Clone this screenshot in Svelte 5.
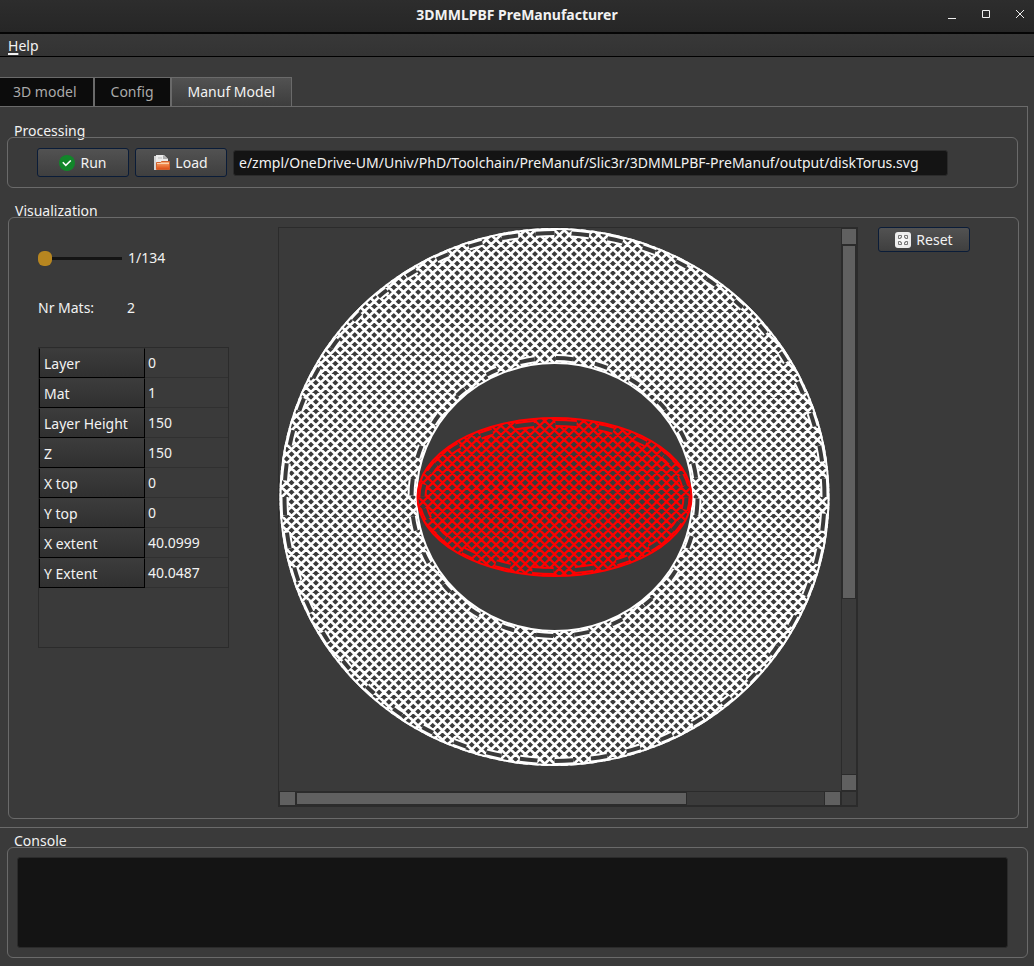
<script>
  import { onMount } from 'svelte';

  let pathField;
  let layer = $state(1);
  let path = $state(
    'e/zmpl/OneDrive-UM/Univ/PhD/Toolchain/PreManuf/Slic3r/3DMMLPBF-PreManuf/output/diskTorus.svg'
  );

  const rows = [
    ['Layer', '0'],
    ['Mat', '1'],
    ['Layer Height', '150'],
    ['Z', '150'],
    ['X top', '0'],
    ['Y top', '0'],
    ['X extent', '40.0999'],
    ['Y Extent', '40.0487']
  ];

  // Slice geometry, in viewport pixels
  const cx = 275.5;
  const cy = 269;
  const pitchX = 9.74;
  const pitchY = 9.53;

  // Both diagonal families of the infill, covering a box around the centre
  function hatch(rx, ry) {
    let d = '';
    const n = Math.ceil(rx / pitchX + ry / pitchY) + 1;
    const h = ry + 4;
    const run = (h / pitchY) * pitchX;
    for (let k = -n; k <= n; k++) {
      const x = cx + k * pitchX;
      d += `M${x - run} ${cy - h}L${x + run} ${cy + h}M${x + run} ${cy - h}L${x - run} ${cy + h}`;
    }
    return d;
  }

  // Turns of the infill path, running along the perimeter
  function turns(rx, ry, count, first, length) {
    let d = '';
    for (let i = 0; i < count; i++) {
      const a = ((first + (i * 360) / count) * Math.PI) / 180;
      const skew = Math.abs(Math.sin(2 * a));
      const half = (length * (1 - skew * 0.45)) / (rx + ry);
      const p = (t) => `${(cx + rx * Math.cos(t)).toFixed(2)} ${(cy + ry * Math.sin(t)).toFixed(2)}`;
      d += `M${p(a - half)}A${rx} ${ry} 0 0 1 ${p(a + half)}`;
    }
    return d;
  }

  const ringHatch = hatch(275, 269);
  const coreHatch = hatch(138, 80);
  const outerTurns = turns(270, 264, 48, 178, 19);
  const innerTurns = turns(143, 139, 24, 184, 18);
  const coreTurns = turns(132, 74, 20, 275, 18);

  onMount(() => {
    pathField.scrollLeft = pathField.scrollWidth;
  });
</script>

<div class="window">
  <header class="titlebar">
    <h1>3DMMLPBF PreManufacturer</h1>
    <div class="controls">
      <button aria-label="Minimize"><svg width="12" height="12"><path d="M2 10.500h8" /></svg></button>
      <button aria-label="Maximize"><svg width="12" height="12"><path d="M2.500 2.500h7v7h-7z" /></svg></button>
      <button aria-label="Close"><svg width="12" height="12"><path d="M2 2l8 8M10 2l-8 8" /></svg></button>
    </div>
  </header>

  <nav class="menubar"><button><u>H</u>elp</button></nav>

  <div class="tabs" role="tablist">
    <button role="tab" aria-selected="false">3D model</button>
    <button role="tab" aria-selected="false">Config</button>
    <button role="tab" aria-selected="true" class="active">Manuf Model</button>
  </div>

  <main class="pane">
    <section class="group">
      <h2>Processing</h2>
      <div class="frame processing">
        <button class="push">
          <svg width="16" height="16" viewBox="0 0 16 16">
            <circle cx="8" cy="8" r="8" fill="#12862a" />
            <path d="M3.800 7.300l3 3 5-4.800" fill="none" stroke="#fff" stroke-width="1.600" />
          </svg>
          Run
        </button>
        <button class="push">
          <svg width="16" height="16" viewBox="0 0 16 16">
            <defs>
              <linearGradient id="folder" x2="0" y2="1">
                <stop offset="0" stop-color="#f7b27e" />
                <stop offset="0.450" stop-color="#f08347" />
                <stop offset="1" stop-color="#dc4a14" />
              </linearGradient>
            </defs>
            <path d="M0 1h3v14H0z" fill="#d4d4d4" />
            <path d="M2 0h8l4 4v6H2z" fill="#ececec" />
            <path d="M9 0v4h5z" fill="#aaa" />
            <path d="M4 3h4" stroke="#bbb" />
            <path d="M2.500 14.500v-7h4l1-1h8v8z" fill="url(#folder)" stroke="#d2602c" />
            <path d="M3 8.500h12" stroke="#fbd0ac" />
          </svg>
          Load
        </button>
        <input class="path" type="text" aria-label="File path" bind:this={pathField} bind:value={path} />
      </div>
    </section>

    <section class="group visual">
      <h2>Visualization</h2>
      <div class="frame visualization">
        <div class="side">
          <div class="slider">
            <input id="layer" type="range" min="1" max="134" bind:value={layer} />
            <label for="layer">{layer}/134</label>
          </div>
          <div class="mats"><span>Nr Mats:</span><span>2</span></div>
          <div class="sheet">
            <table>
              <tbody>
                {#each rows as [name, value]}
                  <tr><th scope="row">{name}</th><td>{value}</td></tr>
                {/each}
              </tbody>
            </table>
          </div>
        </div>

        <div class="view">
          <div class="canvas">
            <svg width="562" height="562" viewBox="0 0 562 562" fill="none">
              <defs>
                <clipPath id="ring">
                  <path
                    clip-rule="evenodd"
                    d="M0.500 269a275 269 0 0 1 550 0a275 269 0 0 1 -550 0zM137.500 269a138 134 0 0 0 276 0a138 134 0 0 0 -276 0z"
                  />
                </clipPath>
                <clipPath id="core"><ellipse {cx} {cy} rx="137" ry="79" /></clipPath>
              </defs>
              <g stroke="#fff">
                <path d={ringHatch} clip-path="url(#ring)" stroke-width="2.700" />
                <path d={outerTurns} stroke-width="8" />
                <path d={innerTurns} stroke-width="8" />
                <ellipse {cx} {cy} rx="274" ry="268" stroke-width="2" />
                <ellipse {cx} {cy} rx="138" ry="134" stroke-width="2" />
              </g>
              <g stroke="#3a3a3a" stroke-width="4">
                <path d={outerTurns} />
                <path d={innerTurns} />
              </g>
              <g stroke="#f00">
                <path d={coreHatch} clip-path="url(#core)" stroke-width="2.300" />
                <path d={coreTurns} stroke-width="8" />
                <ellipse {cx} {cy} rx="137" ry="79" stroke-width="2" />
              </g>
              <path d={coreTurns} stroke="#3a3a3a" stroke-width="4" />
            </svg>
          </div>
          <div class="bar vertical">
            <button aria-label="Scroll up"></button>
            <div class="track"><div class="thumb" style="height: 67%"></div></div>
            <button aria-label="Scroll down"></button>
          </div>
          <div class="bar horizontal">
            <button aria-label="Scroll left"></button>
            <div class="track"><div class="thumb" style="width: 74%"></div></div>
            <button aria-label="Scroll right"></button>
          </div>
          <div class="corner"></div>
        </div>

        <button class="push reset">
          <svg width="16" height="16" viewBox="0 0 16 16">
            <rect width="16" height="16" rx="3" fill="#eee" />
            <path d="M8 2v12M2 8h12" stroke="#fff" />
            <path
              d="M3.500 3.500h3v2h-1v1h-2zM9.500 3.500h3v3h-2v-1h-1zM3.500 9.500h2v1h1v2h-3zM10.500 9.500h2v3h-3v-2h1z"
              fill="none"
              stroke="#777"
            />
          </svg>
          Reset
        </button>
      </div>
    </section>
  </main>

  <section class="group console">
    <h2><label for="console">Console</label></h2>
    <div class="frame"><textarea id="console" readonly></textarea></div>
  </section>
</div>

<style>
  :global(body) {
    margin: 0;
    background: #3a3a3a;
  }
  .window {
    display: flex;
    flex-direction: column;
    min-height: 100vh;
    box-sizing: border-box;
    padding-bottom: 8px;
    background: #3a3a3a;
    color: #f2f2f2;
    font: 14px/20px 'Noto Sans', sans-serif;
  }
  button,
  input,
  textarea {
    box-sizing: border-box;
    margin: 0;
    padding: 0;
    border: 0;
    background: none;
    color: inherit;
    font: inherit;
  }
  .titlebar {
    display: grid;
    grid-template-columns: 1fr auto 1fr;
    align-items: center;
    height: 32px;
    border-bottom: 2px solid #050505;
    background: linear-gradient(#2d2d2d, #262626);
  }
  h1 {
    grid-column: 2;
    margin: 0;
    padding-bottom: 2px;
    font-size: 14px;
    line-height: 20px;
    font-weight: 700;
  }
  .controls {
    display: flex;
    justify-content: flex-end;
    gap: 22px;
    padding: 0 8px 4px 0;
  }
  .controls button {
    width: 12px;
    height: 12px;
  }
  .controls svg {
    display: block;
    fill: none;
    stroke: #eee;
  }
  .menubar {
    height: 22px;
    padding-left: 8px;
    border-bottom: 1px solid #000;
    background: linear-gradient(#383838, #333);
  }
  .menubar button {
    display: block;
    line-height: 24px;
  }
  u {
    text-decoration-thickness: 2px;
    text-underline-offset: 2px;
  }
  .tabs {
    display: flex;
    align-items: flex-end;
    margin-top: 20px;
  }
  .tabs button {
    height: 29px;
    border-top: 1px solid #6a6a6a;
    border-right: 2px solid #6a6a6a;
    padding: 0 16px;
    background: #0c0c0c;
    color: #aaa;
  }
  .tabs button:first-child {
    padding-left: 13px;
  }
  .tabs .active {
    border-right-width: 1px;
    background: linear-gradient(#525252, #3d3d3d);
    color: #f2f2f2;
  }
  .pane {
    display: flex;
    flex-direction: column;
    flex: 1;
    gap: 13px;
    margin-right: 6px;
    padding: 14px 8px 8px 7px;
    border: 1px solid #6a6a6a;
    border-left: 0;
  }
  .group {
    display: flex;
    flex-direction: column;
  }
  .visual {
    flex: 1;
    padding-left: 1px;
  }
  h2 {
    height: 16px;
    margin: 0 0 0 7px;
    font-size: 14px;
    line-height: 20px;
    font-weight: 400;
  }
  .frame {
    box-sizing: border-box;
    border: 1px solid #6a6a6a;
    border-radius: 6px;
  }
  .processing {
    display: flex;
    align-items: center;
    gap: 6px;
    height: 51px;
    margin-right: 1px;
    padding: 0 69px 0 29px;
  }
  .push {
    display: flex;
    flex: none;
    align-items: center;
    justify-content: center;
    gap: 5px;
    width: 92px;
    height: 29px;
    border: 1px solid #0a1c38;
    border-radius: 3px;
    background: linear-gradient(#525252, #3f3f3f);
  }
  .path {
    flex: 1;
    min-width: 0;
    height: 26px;
    padding: 0 5px;
    border: 1px solid #2b2b2b;
    border-radius: 3px;
    background: #141414;
  }
  .visualization {
    display: grid;
    grid-template-columns: 191px minmax(0, 1fr) 92px;
    flex: 1;
    padding: 9px 48px 11px 29px;
  }
  .side {
    padding-top: 21px;
  }
  .slider {
    display: flex;
    align-items: center;
    gap: 6px;
    height: 20px;
  }
  .slider input {
    width: 84px;
    height: 15px;
    appearance: none;
    background: linear-gradient(#141414, #141414) center / 100% 3px no-repeat;
  }
  .slider input::-webkit-slider-thumb {
    appearance: none;
    width: 14px;
    height: 15px;
    border-radius: 6px;
    background: #b78620;
  }
  .mats {
    display: grid;
    grid-template-columns: 89px 1fr;
    margin: 30px 0 29px;
  }
  .sheet {
    box-sizing: border-box;
    height: 301px;
    border: 1px solid #2b2b2b;
  }
  table {
    width: 100%;
    border-collapse: separate;
    border-spacing: 0;
    table-layout: fixed;
  }
  th,
  td {
    box-sizing: border-box;
    height: 30px;
    padding: 0 4px;
    text-align: left;
    font-weight: 400;
  }
  th {
    width: 106px;
    padding-top: 2px;
    border: 1px solid #000;
    border-top-color: #3a3a3a;
    background: linear-gradient(#3c3c3c, #303030);
  }
  td {
    border-bottom: 1px solid #303030;
    padding: 0 3px;
  }
  .view {
    display: grid;
    grid-template-columns: minmax(0, 1fr) 16px;
    grid-template-rows: minmax(0, 1fr) 15px;
    margin: 0 20px 0 49px;
    border: 1px solid #2b2b2b;
  }
  .canvas {
    overflow: hidden;
  }
  .canvas svg {
    display: block;
  }
  .bar {
    display: flex;
    background: #2b2b2b;
  }
  .vertical {
    flex-direction: column;
    padding: 1px 1px;
  }
  .horizontal {
    padding: 1px;
  }
  .bar button,
  .thumb {
    background: #606060;
  }
  .bar button {
    flex: none;
    width: 15px;
    height: 15px;
  }
  .horizontal button {
    height: 13px;
  }
  .track {
    flex: 1;
    margin: 1px 0;
    background: #3b3b3b;
  }
  .horizontal .track {
    margin: 0 1px;
  }
  .thumb {
    box-sizing: border-box;
    border: 1px solid #2b2b2b;
  }
  .horizontal .thumb {
    height: 100%;
  }
  .vertical button {
    width: 14px;
  }
  .corner {
    border: 1px solid #2b2b2b;
  }
  .reset {
    height: 25px;
  }
  .console {
    margin: 3px 6px 0 7px;
  }
  .console .frame {
    height: 111px;
    padding: 9px 19px 9px 9px;
  }
  textarea {
    display: block;
    width: 100%;
    height: 91px;
    border: 1px solid #2b2b2b;
    border-radius: 3px;
    background: #141414;
    resize: none;
  }
</style>
